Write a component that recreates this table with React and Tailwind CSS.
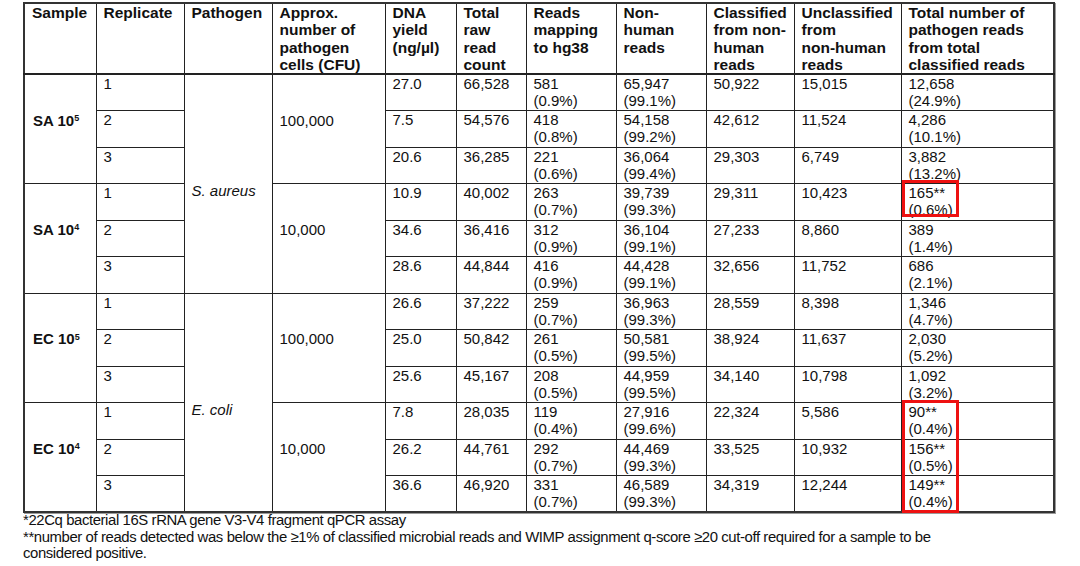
import React from 'react';

const groups = [
  {
    label: 'SA 10',
    exp: '5',
    cfu: '100,000',
    rows: [
      ['1', '27.0', '66,528', '581', '(0.9%)', '65,947', '(99.1%)', '50,922', '15,015', '12,658', '(24.9%)'],
      ['2', '7.5', '54,576', '418', '(0.8%)', '54,158', '(99.2%)', '42,612', '11,524', '4,286', '(10.1%)'],
      ['3', '20.6', '36,285', '221', '(0.6%)', '36,064', '(99.4%)', '29,303', '6,749', '3,882', '(13.2%)'],
    ],
  },
  {
    label: 'SA 10',
    exp: '4',
    cfu: '10,000',
    rows: [
      ['1', '10.9', '40,002', '263', '(0.7%)', '39,739', '(99.3%)', '29,311', '10,423', '165**', '(0.6%)'],
      ['2', '34.6', '36,416', '312', '(0.9%)', '36,104', '(99.1%)', '27,233', '8,860', '389', '(1.4%)'],
      ['3', '28.6', '44,844', '416', '(0.9%)', '44,428', '(99.1%)', '32,656', '11,752', '686', '(2.1%)'],
    ],
  },
  {
    label: 'EC 10',
    exp: '5',
    cfu: '100,000',
    rows: [
      ['1', '26.6', '37,222', '259', '(0.7%)', '36,963', '(99.3%)', '28,559', '8,398', '1,346', '(4.7%)'],
      ['2', '25.0', '50,842', '261', '(0.5%)', '50,581', '(99.5%)', '38,924', '11,637', '2,030', '(5.2%)'],
      ['3', '25.6', '45,167', '208', '(0.5%)', '44,959', '(99.5%)', '34,140', '10,798', '1,092', '(3.2%)'],
    ],
  },
  {
    label: 'EC 10',
    exp: '4',
    cfu: '10,000',
    rows: [
      ['1', '7.8', '28,035', '119', '(0.4%)', '27,916', '(99.6%)', '22,324', '5,586', '90**', '(0.4%)'],
      ['2', '26.2', '44,761', '292', '(0.7%)', '44,469', '(99.3%)', '33,525', '10,932', '156**', '(0.5%)'],
      ['3', '36.6', '46,920', '331', '(0.7%)', '46,589', '(99.3%)', '34,319', '12,244', '149**', '(0.4%)'],
    ],
  },
];

const headers = [
  'Sample',
  'Replicate',
  'Pathogen',
  'Approx. number of pathogen cells (CFU)',
  'DNA yield (ng/µl)',
  'Total raw read count',
  'Reads mapping to hg38',
  'Non- human reads',
  <>Classified from non- human reads</>,
  <>
    Unclassified from <span className="whitespace-nowrap">non-human</span> reads
  </>,
  'Total number of pathogen reads from total classified reads',
];

const widths = [72, 88, 88, 113, 71, 70, 90, 90, 88, 107, 153];

const base = 'border border-[#222] pl-[7px] pr-[3px]';
const cell = `${base} align-top pt-0`;
const mid = `${base} align-middle`;

const Stacked = ({ a, b }) => (
  <>
    <div>{a}</div>
    <div>{b}</div>
  </>
);

export default function App() {
  return (
    <div className="relative min-h-screen bg-white text-[#111] font-['Liberation_Sans',Arial,sans-serif]">
      <div className="pl-[23px] pt-[2px]">
        <table className="table-fixed border-collapse border-2 border-[#333] text-[15px] leading-[17px] w-[1031px] shadow-[1px_1px_0_#9a9a9a]">
          <colgroup>
            {widths.map((w, i) => (
              <col key={i} style={{ width: w }} />
            ))}
          </colgroup>
          <thead>
            <tr className="h-[71px] border-b-2 border-[#222]">
              {headers.map((h, i) => (
                <th key={i} className={`${cell} text-left font-bold text-[15.5px] leading-[17.3px]`}>
                  {h}
                </th>
              ))}
            </tr>
          </thead>
          <tbody>
            {groups.map((g, gi) =>
              g.rows.map((r, ri) => (
                <tr key={`${gi}-${ri}`} className="h-[36.5px]">
                  {ri === 0 && (
                    <td rowSpan={3} className={`${mid} font-bold pl-[8px] pb-[18px]`}>
                      {g.label}
                      <sup className="text-[9px]">{g.exp}</sup>
                    </td>
                  )}
                  <td className={cell}>{r[0]}</td>
                  {ri === 0 && gi % 2 === 0 && (
                    <td rowSpan={6} className={`${mid} italic`}>
                      <div className="translate-y-[7px]">{gi === 0 ? 'S. aureus' : 'E. coli'}</div>
                    </td>
                  )}
                  {ri === 0 && (
                    <td rowSpan={3} className={`${mid} pb-[18px]`}>
                      {g.cfu}
                    </td>
                  )}
                  <td className={cell}>{r[1]}</td>
                  <td className={cell}>{r[2]}</td>
                  <td className={cell}>
                    <Stacked a={r[3]} b={r[4]} />
                  </td>
                  <td className={cell}>
                    <Stacked a={r[5]} b={r[6]} />
                  </td>
                  <td className={cell}>{r[7]}</td>
                  <td className={cell}>{r[8]}</td>
                  <td className={cell}>
                    <Stacked a={r[9]} b={r[10]} />
                  </td>
                </tr>
              ))
            )}
          </tbody>
        </table>
        <div className="text-[14.9px] leading-[16.5px] -mt-[1px] tracking-[-0.4px]">
          <p>*22Cq bacterial 16S rRNA gene V3-V4 fragment qPCR assay</p>
          <p>
            **number of reads detected was below the ≥1% of classified microbial reads and WIMP assignment q-score ≥20
            cut-off required for a sample to be
          </p>
          <p>considered positive.</p>
        </div>
      </div>

      {/* highlighted cells */}
      <div className="absolute left-[902px] top-[180px] w-[57px] h-[37px] border-[3px] border-[#ee1111]" />
      <div className="absolute left-[902px] top-[400px] w-[57px] h-[113px] border-[3px] border-[#ee1111]" />
    </div>
  );
}
